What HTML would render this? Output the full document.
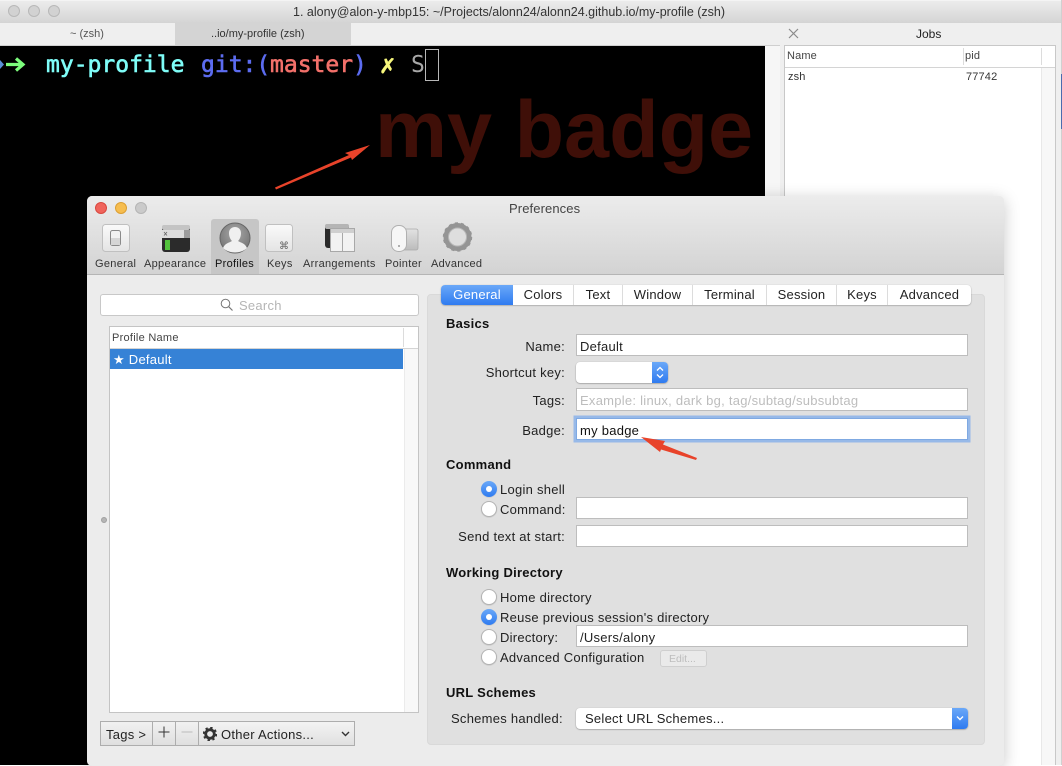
<!DOCTYPE html>
<html><head><meta charset="utf-8"><style>
html,body{margin:0;padding:0}
body{width:1062px;height:765px;position:relative;overflow:hidden;background:#fff;font-family:"Liberation Sans",sans-serif;color:#222}
div,span{position:absolute;box-sizing:border-box}
.t{white-space:nowrap;font-size:13px;letter-spacing:.26px;line-height:16px;height:16px;margin-top:1px}
.z{margin-top:0;letter-spacing:0}
.r{text-align:right;right:497px}
.h{font-weight:bold;left:446px;color:#111}
.f{left:576px;width:392px;background:#fff;border:1px solid #bdbdbd;height:22px}
.rad{left:481px;width:16px;height:16px;border-radius:50%;background:#fff;border:1px solid #b4b4b4;box-shadow:0 .5px 1px rgba(0,0,0,.15)}
.on{background:linear-gradient(#6aa8f8,#2f7bf0);border:none}
.on:after{content:"";position:absolute;left:5px;top:5px;width:6px;height:6px;border-radius:50%;background:#fff}
.tab{top:285px;height:20px;text-align:center;line-height:20px;font-size:13px;letter-spacing:.2px;border-right:1px solid #dcdcdc;color:#222}
.lab{top:257px;font-size:11px;letter-spacing:.3px;line-height:14px;height:14px;white-space:nowrap;color:#333;text-align:center}
.tl{width:12px;height:12px;border-radius:50%}
.btn{top:721px;height:25px;background:linear-gradient(#f1f1f1,#dfdfdf);border:1px solid #adadad}
.m{font-family:"DejaVu Sans Mono",monospace;font-size:23px;line-height:28px;height:28px;top:51px;white-space:pre;-webkit-text-stroke:.6px currentColor}
</style></head><body>

<!-- iTerm window -->
<div style="left:0;top:0;width:1062px;height:23px;background:linear-gradient(#ececec,#d4d4d4);border-top:1px solid #f4f4f4"></div>
<div class="tl" style="left:8px;top:5px;background:#d2d2d2;border:1px solid #b8b8b8"></div>
<div class="tl" style="left:28px;top:5px;background:#d2d2d2;border:1px solid #b8b8b8"></div>
<div class="tl" style="left:48px;top:5px;background:#d2d2d2;border:1px solid #b8b8b8"></div>
<div class="t z" style="left:293px;top:4px;font-size:12.5px;color:#333">1. alony@alon-y-mbp15: ~/Projects/alonn24/alonn24.github.io/my-profile (zsh)</div>
<div style="left:0;top:23px;width:780px;height:23px;background:#efefef;border-bottom:1px solid #cfcfcf"></div>
<div style="left:175px;top:23px;width:176px;height:22px;background:#d4d4d4"></div>
<div class="t z" style="left:70px;top:26px;font-size:11px;color:#555">~ (zsh)</div>
<div class="t z" style="left:211px;top:26px;font-size:11px;color:#333">..io/my-profile (zsh)</div>

<div style="left:0;top:46px;width:765px;height:719px;background:#000"></div>
<div style="left:765px;top:46px;width:15px;height:719px;background:#f6f6f6"></div>
<div style="left:0;top:60px;width:4px;height:9px;background:#5b8fd8;clip-path:polygon(0 0,100% 50%,0 100%)"></div>
<svg style="position:absolute;left:4px;top:55px" width="24" height="20"><path d="M2 9.500H18M12 3.500L19 9.500L12 15.500" fill="none" stroke="#7cfc7c" stroke-width="3.200"/></svg>
<span class="m" style="left:46px;color:#7ffdf8">my-profile</span>
<span class="m" style="left:201px;color:#5c6cf0">git:(</span>
<span class="m" style="left:270px;color:#f2706a">master</span>
<span class="m" style="left:353px;color:#5c6cf0">)</span>
<span class="m" style="left:380px;color:#f7f77c;font-size:25px">✗</span>
<span class="m" style="left:411px;color:#a8a8a8;-webkit-text-stroke:0">S</span>
<div style="left:425px;top:49px;width:14px;height:32px;border:1px solid #b8b8b8"></div>
<div class="t z" style="left:375px;top:84px;font-size:81px;line-height:92px;height:92px;font-weight:bold;color:#3f0f08">my badge</div>

<!-- Jobs -->
<div style="left:780px;top:23px;width:282px;height:742px;background:#efefef"></div>
<svg style="position:absolute;left:788px;top:28px" width="11" height="11"><path d="M1 1L10 10M10 1L1 10" stroke="#8a8a8a" stroke-width="1.200"/></svg>
<div class="t z" style="left:916px;top:26px;color:#222;font-size:12px">Jobs</div>
<div style="left:784px;top:45px;width:272px;height:720px;background:#fff;border:1px solid #c8c8c8;border-bottom:none"></div>
<div style="left:785px;top:67px;width:270px;height:1px;background:#d4d4d4"></div>
<div style="left:1041px;top:68px;width:14px;height:697px;background:#f7f7f7;border-left:1px solid #e8e8e8"></div>
<div style="left:963px;top:48px;width:1px;height:17px;background:#dcdcdc"></div>
<div style="left:1041px;top:48px;width:1px;height:17px;background:#dcdcdc"></div>
<div class="t z" style="left:787px;top:48px;font-size:11px;letter-spacing:.15px;color:#444">Name</div>
<div class="t z" style="left:965px;top:48px;font-size:11px;letter-spacing:.15px;color:#444">pid</div>
<div class="t z" style="left:788px;top:69px;font-size:11px;letter-spacing:.15px;color:#333">zsh</div>
<div class="t z" style="left:966px;top:69px;font-size:11px;letter-spacing:.15px;color:#333">77742</div>
<div style="left:1061px;top:0;width:1px;height:765px;background:#d0d0d0"></div>
<div style="left:1061px;top:74px;width:1px;height:55px;background:#4a6cae"></div>

<!-- Preferences window -->
<div style="left:87px;top:196px;width:917px;height:570px;background:#ececec;border-radius:5px;box-shadow:0 3px 16px rgba(0,0,0,.22)"></div>
<div style="left:87px;top:196px;width:917px;height:79px;background:linear-gradient(#ececec,#d3d3d3);border-radius:5px 5px 0 0;border-bottom:1px solid #b5b5b5"></div>
<div class="tl" style="left:95px;top:202px;background:#f0645c;border:.5px solid #d8483f"></div>
<div class="tl" style="left:115px;top:202px;background:#f6bd4f;border:.5px solid #dc9f33"></div>
<div class="tl" style="left:135px;top:202px;background:#cacaca;border:.5px solid #b5b5b5"></div>
<div class="t z" style="left:509px;top:201px;color:#444;font-size:13px;letter-spacing:.1px">Preferences</div>
<div style="left:211px;top:219px;width:48px;height:55px;background:#c6c6c6;border-radius:3px 3px 0 0"></div>

<!-- toolbar icons -->
<svg style="position:absolute;left:95px;top:220px" width="390" height="36">
<defs><linearGradient id="g" x1="0" y1="0" x2="0" y2="1"><stop offset="0" stop-color="#fafafa"/><stop offset="1" stop-color="#e4e4e4"/></linearGradient>
<linearGradient id="tp" x1="0" y1="0" x2="0" y2="1"><stop offset="0" stop-color="#e2e2e2"/><stop offset="1" stop-color="#bcbcbc"/></linearGradient>
<radialGradient id="p" cx=".5" cy=".35" r=".7"><stop offset="0" stop-color="#a8a8a8"/><stop offset="1" stop-color="#707070"/></radialGradient></defs>
<rect x="7.500" y="4.500" width="27" height="27" rx="3" fill="url(#g)" stroke="#c0c0c0"/>
<rect x="15.500" y="10.500" width="10" height="15" rx="2" fill="#f2f2f2" stroke="#8a8a8a"/><rect x="16" y="18" width="9" height="7" fill="#d6d6d6"/>
<rect x="67" y="5" width="28" height="27" rx="3" fill="#2b2b2b"/><rect x="67" y="5" width="28" height="5" rx="2" fill="#c4c4c4"/><rect x="67" y="10" width="22" height="8" fill="#dcdcdc"/><rect x="89" y="10" width="6" height="8" fill="#9c9c9c"/><path d="M69 12l3 3.500M72 12l-3 3.500" stroke="#666" stroke-width=".8"/>
<rect x="70" y="20" width="5" height="10" fill="#52c23c"/>
<circle cx="140" cy="18" r="15" fill="url(#p)" stroke="#666" stroke-width="1"/>
<path d="M128 28c2-5 6-5 9-7c-2-2-3-5-3-8c0-4 3-6 6-6s6 2 6 6c0 3-1 6-3 8c3 2 7 2 9 7c-3 3-8 4.500-12 4.500s-9-1.500-12-4.500z" fill="#f0f0f0"/>
<rect x="170.500" y="4.500" width="27" height="27" rx="3" fill="url(#g)" stroke="#c0c0c0"/>
<text x="184" y="29" font-size="10" fill="#666" font-family="DejaVu Sans">⌘</text>
<rect x="230" y="4" width="24" height="24" rx="3" fill="#2a2a2a"/><rect x="230" y="4" width="24" height="5" rx="2" fill="#b5b5b5"/>
<rect x="235.500" y="8.500" width="24" height="23" fill="#f2f2f2" stroke="#a8a8a8"/><rect x="236" y="9" width="23" height="4" fill="#cfcfcf"/><path d="M247.500 13V31" stroke="#a8a8a8"/>
<rect x="303" y="9" width="20" height="21" rx="2" fill="url(#tp)" stroke="#aaa" stroke-width=".8"/>
<rect x="296.500" y="5.500" width="15" height="26" rx="7" fill="#f6f6f6" stroke="#b0b0b0"/><circle cx="304" cy="26" r="1" fill="#999"/>
<g transform="translate(362.500,17)"><circle r="11.500" fill="none" stroke="#959595" stroke-width="5"/><circle r="13.300" fill="none" stroke="#959595" stroke-width="2.800" stroke-dasharray="3 2.970"/><circle r="8.500" fill="#dedede"/><circle r="9" fill="none" stroke="#b8b8b8" stroke-width="1"/></g>
</svg>
<div class="lab" style="left:95px">General</div>
<div class="lab" style="left:144px">Appearance</div>
<div class="lab" style="left:215px;color:#111">Profiles</div>
<div class="lab" style="left:267px">Keys</div>
<div class="lab" style="left:303px">Arrangements</div>
<div class="lab" style="left:385px">Pointer</div>
<div class="lab" style="left:431px">Advanced</div>

<!-- left column -->
<div style="left:100px;top:294px;width:319px;height:22px;background:#fff;border:1px solid #c8c8c8;border-radius:3px"></div>
<svg style="position:absolute;left:220px;top:298px" width="14" height="14"><circle cx="5.500" cy="5.500" r="4.300" fill="none" stroke="#777" stroke-width="1"/><path d="M8.800 8.800L12.500 12.500" stroke="#777" stroke-width="1.200"/></svg>
<div class="t" style="left:239px;top:297px;color:#b5b5b5">Search</div>
<div style="left:109px;top:326px;width:310px;height:387px;background:#fff;border:1px solid #c4c4c4"></div>
<div style="left:110px;top:348px;width:308px;height:1px;background:#d4d4d4"></div>
<div style="left:403px;top:328px;width:1px;height:19px;background:#dcdcdc"></div>
<div style="left:404px;top:349px;width:14px;height:363px;background:#f8f8f8;border-left:1px solid #ebebeb"></div>
<div class="t" style="left:112px;top:329px;font-size:11px;color:#444">Profile Name</div>
<div style="left:110px;top:349px;width:293px;height:20px;background:#3682d6"></div>
<div class="t" style="left:113px;top:351px;color:#fff"><span style="position:static;font-family:'DejaVu Sans'">★</span> Default</div>
<div style="left:101px;top:517px;width:6px;height:6px;border-radius:50%;background:#b5b5b5;border:1px solid #a0a0a0"></div>

<div class="btn" style="left:100px;width:53px"></div>
<div class="btn" style="left:152px;width:24px"></div>
<div class="btn" style="left:175px;width:24px"></div>
<div class="btn" style="left:198px;width:157px;background:linear-gradient(#f3f3f3,#e0e0e0)"></div>
<div class="t" style="left:106px;top:726px">Tags &gt;</div>
<svg style="position:absolute;left:158px;top:726px" width="12" height="12"><path d="M6 .5V11.500M.5 6H11.500" stroke="#333" stroke-width="1"/></svg>
<svg style="position:absolute;left:181px;top:726px" width="12" height="12"><path d="M.5 6H11.500" stroke="#bbb" stroke-width="1"/></svg>
<svg style="position:absolute;left:203px;top:727px" width="14" height="14"><circle cx="7" cy="7" r="4.300" fill="none" stroke="#333" stroke-width="2.800"/><circle cx="7" cy="7" r="6.300" fill="none" stroke="#333" stroke-width="1.800" stroke-dasharray="2.400 2.550"/></svg>
<div class="t" style="left:221px;top:726px">Other Actions...</div>
<svg style="position:absolute;left:341px;top:731px" width="9" height="6"><path d="M1 1L4.500 4.500L8 1" fill="none" stroke="#333" stroke-width="1.400"/></svg>

<!-- right panel -->
<div style="left:427px;top:294px;width:558px;height:451px;background:#e0e0e0;border-radius:4px;border:1px solid #d9d9d9"></div>
<div style="left:441px;top:285px;width:530px;height:20px;background:#fff;border-radius:4px;box-shadow:0 .5px 1.500px rgba(0,0,0,.35)"></div>
<div class="tab" style="left:441px;width:72px;background:linear-gradient(#6aa8f8,#2f7bf0);color:#fff;border:none;border-radius:4px 0 0 4px">General</div>
<div class="tab" style="left:513px;width:61px">Colors</div>
<div class="tab" style="left:574px;width:49px">Text</div>
<div class="tab" style="left:623px;width:70px">Window</div>
<div class="tab" style="left:693px;width:74px">Terminal</div>
<div class="tab" style="left:767px;width:70px">Session</div>
<div class="tab" style="left:837px;width:51px">Keys</div>
<div class="tab" style="left:888px;width:83px;border:none">Advanced</div>

<div class="t h" style="top:315px">Basics</div>
<div class="t r" style="top:338px">Name:</div>
<div class="f" style="top:334px"></div><div class="t" style="left:580px;top:338px">Default</div>
<div class="t r" style="top:364px">Shortcut key:</div>
<div style="left:576px;top:362px;width:92px;height:21px;background:#fff;border-radius:4px;box-shadow:0 .5px 1.500px rgba(0,0,0,.4)"></div>
<div style="left:652px;top:362px;width:16px;height:21px;background:linear-gradient(#6aa8f8,#2f7bf0);border-radius:0 4px 4px 0"></div>
<svg style="position:absolute;left:655px;top:365px" width="10" height="15"><path d="M2 5.500L5 2.500L8 5.500M2 9.500L5 12.500L8 9.500" fill="none" stroke="#fff" stroke-width="1.300"/></svg>
<div class="t r" style="top:392px">Tags:</div>
<div class="f" style="top:388px;height:23px"></div><div class="t" style="left:580px;top:392px;color:#bdbdbd">Example: linux, dark bg, tag/subtag/subsubtag</div>
<div class="t r" style="top:422px">Badge:</div>
<div class="f" style="top:418px;box-shadow:0 0 0 2.500px #97b9e8;border:1px solid #7fa9e2"></div><div class="t" style="left:580px;top:422px;color:#111">my badge</div>

<div class="t h" style="top:456px">Command</div>
<div class="rad on" style="top:481px"></div><div class="t" style="left:500px;top:481px">Login shell</div>
<div class="rad" style="top:501px"></div><div class="t" style="left:500px;top:501px">Command:</div>
<div class="f" style="top:497px"></div>
<div class="t r" style="top:528px">Send text at start:</div>
<div class="f" style="top:525px"></div>

<div class="t h" style="top:564px">Working Directory</div>
<div class="rad" style="top:589px"></div><div class="t" style="left:500px;top:589px">Home directory</div>
<div class="rad on" style="top:609px"></div><div class="t" style="left:500px;top:609px">Reuse previous session's directory</div>
<div class="rad" style="top:629px"></div><div class="t" style="left:500px;top:629px">Directory:</div>
<div class="f" style="top:625px"></div><div class="t" style="left:580px;top:629px">/Users/alony</div>
<div class="rad" style="top:649px"></div><div class="t" style="left:500px;top:649px">Advanced Configuration</div>
<div style="left:660px;top:650px;width:47px;height:17px;background:#eaeaea;border:1px solid #cfcfcf;border-radius:3px"></div>
<div class="t z" style="left:669px;top:651px;font-size:10.500px;color:#bdbdbd">Edit...</div>

<div class="t h" style="top:684px">URL Schemes</div>
<div class="t" style="left:451px;top:710px">Schemes handled:</div>
<div style="left:576px;top:708px;width:392px;height:21px;background:#fff;border-radius:4px;box-shadow:0 .5px 1.500px rgba(0,0,0,.4)"></div>
<div style="left:952px;top:708px;width:16px;height:21px;background:linear-gradient(#6aa8f8,#2f7bf0);border-radius:0 4px 4px 0"></div>
<svg style="position:absolute;left:955px;top:715px" width="10" height="7"><path d="M2 1.500L5 4.500L8 1.500" fill="none" stroke="#fff" stroke-width="1.400"/></svg>
<div class="t" style="left:585px;top:710px">Select URL Schemes...</div>

<!-- arrows -->
<svg style="position:absolute;left:0;top:0" width="1062" height="765">
<path d="M370 145L345 153L349 155L275 187.500L276 189.500L351 157.500L352 160Z" fill="#e8432a"/>
<path d="M641 437L665 441L663 444.500L697 458L696 460L661 449.500L660 452Z" fill="#e8432a"/>
</svg>
</body></html>
